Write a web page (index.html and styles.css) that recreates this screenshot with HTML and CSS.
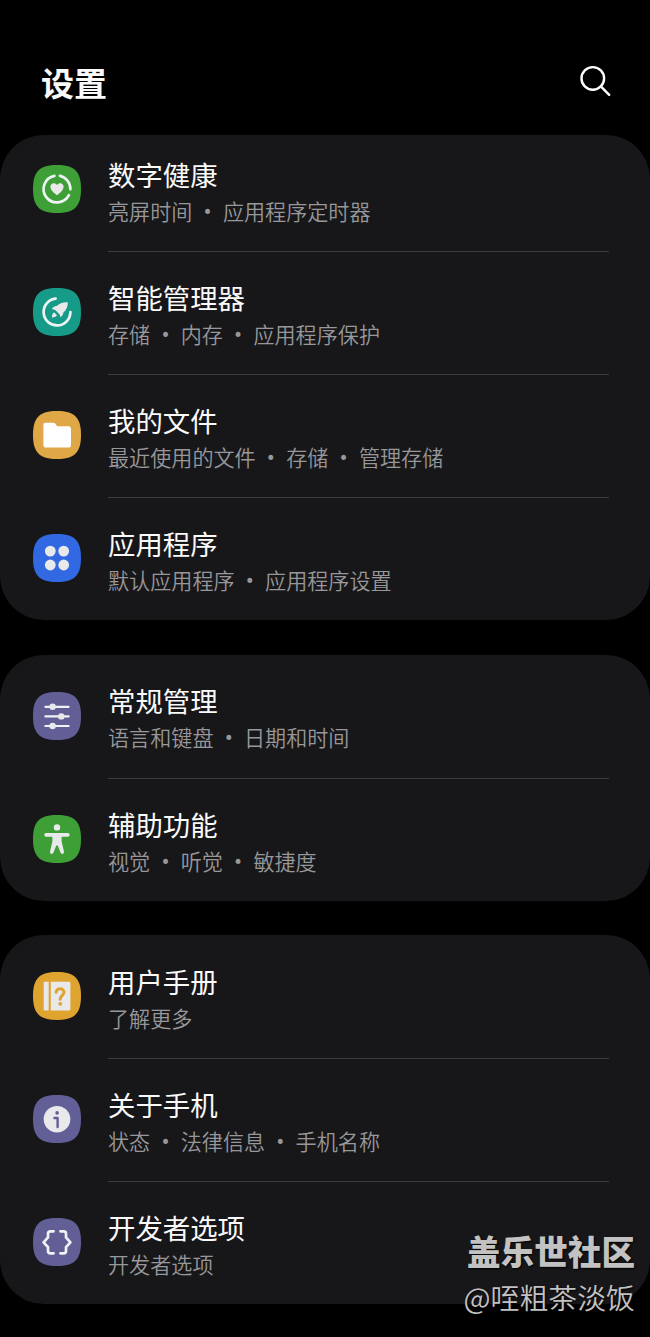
FILE: index.html
```html
<!DOCTYPE html>
<html lang="zh-CN">
<head>
  <meta charset="UTF-8">
  <meta name="viewport" content="width=device-width, initial-scale=1.0">
  <title>设置</title>
  <link rel="stylesheet" href="styles.css">
</head>
<body>
  <header class="header">
    <h1>设置</h1>
    <svg class="search" viewBox="0 0 32 32">
      <circle cx="13.8" cy="13.4" r="11.3"/>
      <path d="M21.8 21.4L30.2 29.8"/>
    </svg>
  </header>

  <main>
    <section class="card scrolled">
      <div class="item">
        <svg class="icon green" viewBox="0 0 48 48">
          <path class="bg" d="M24 0C41.5 0 48 6.5 48 24S41.5 48 24 48 0 41.5 0 24 6.5 0 24 0Z"/>
          <path class="line" d="M26.9 10.9A13.4 13.4 0 0 1 37.4 24.3M35.9 30.2A13.4 13.4 0 1 1 21.4 10.9"/>
          <path class="fill" d="M24 30.2C21.5 28.2 17.4 25.3 17.4 21.7C17.4 17.9 22 17 24 20.1C26 17 30.6 17.9 30.6 21.7C30.6 25.3 26.5 28.2 24 30.2Z"/>
        </svg>
        <div class="text">
          <h2>数字健康</h2>
          <p>亮屏时间<span class="dot">•</span>应用程序定时器</p>
        </div>
      </div>
      <div class="item">
        <svg class="icon teal" viewBox="0 0 48 48">
          <path class="bg" d="M24 0C41.5 0 48 6.5 48 24S41.5 48 24 48 0 41.5 0 24 6.5 0 24 0Z"/>
          <path class="line" d="M22.6 10.7A13.4 13.4 0 1 0 37.4 24"/>
          <path class="fill" d="M34.8 14.2C35 19 33 22.2 30.4 24.6C30.2 26.6 29.2 28.2 27.4 29.3C27.2 27 26.6 26 25.4 25.2L22.8 22.6C21.8 21.6 20.6 21.2 18.7 21.2C19.8 19.2 21.4 18.3 23.6 18.1C26.4 15.2 30 13.9 34.8 14.2Z"/>
          <path class="fill" d="M21 24.2L24 27.2C23 28.8 21.3 29.3 18.8 29.4C19 27 19.6 25.2 21 24.2Z"/>
        </svg>
        <div class="text">
          <h2>智能管理器</h2>
          <p>存储<span class="dot">•</span>内存<span class="dot">•</span>应用程序保护</p>
        </div>
      </div>
      <div class="item">
        <svg class="icon amber" viewBox="0 0 48 48">
          <path class="bg" d="M24 0C41.5 0 48 6.5 48 24S41.5 48 24 48 0 41.5 0 24 6.5 0 24 0Z"/>
          <path class="folder" d="M12.3 11.8H20.6C21.4 11.8 21.9 12.1 22.4 12.8L24.1 15.3H35.5C37 15.3 38 16.3 38 17.8V34C38 35.6 37 36.6 35.4 36.6H13C11.4 36.6 10.4 35.6 10.4 34V13.7C10.4 12.5 11.1 11.8 12.3 11.8Z"/>
        </svg>
        <div class="text">
          <h2>我的文件</h2>
          <p>最近使用的文件<span class="dot">•</span>存储<span class="dot">•</span>管理存储</p>
        </div>
      </div>
      <div class="item">
        <svg class="icon blue" viewBox="0 0 48 48">
          <path class="bg" d="M24 0C41.5 0 48 6.5 48 24S41.5 48 24 48 0 41.5 0 24 6.5 0 24 0Z"/>
          <circle class="fill" cx="17.3" cy="17.1" r="5.4"/>
          <circle class="fill" cx="30.7" cy="17.1" r="5.4"/>
          <circle class="fill" cx="17.3" cy="31" r="5.4"/>
          <circle class="fill" cx="30.7" cy="31" r="5.4"/>
        </svg>
        <div class="text">
          <h2>应用程序</h2>
          <p>默认应用程序<span class="dot">•</span>应用程序设置</p>
        </div>
      </div>
    </section>

    <section class="card">
      <div class="item">
        <svg class="icon purple" viewBox="0 0 48 48">
          <path class="bg" d="M24 0C41.5 0 48 6.5 48 24S41.5 48 24 48 0 41.5 0 24 6.5 0 24 0Z"/>
          <path class="line thin" d="M12.4 14.8H35.6M12.4 24.4H35.6M12.4 34H35.6"/>
          <circle class="fill" cx="19.6" cy="14.8" r="3.2"/>
          <circle class="fill" cx="28.3" cy="24.4" r="3.2"/>
          <circle class="fill" cx="19.6" cy="34" r="3.2"/>
        </svg>
        <div class="text">
          <h2>常规管理</h2>
          <p>语言和键盘<span class="dot">•</span>日期和时间</p>
        </div>
      </div>
      <div class="item">
        <svg class="icon green" viewBox="0 0 48 48">
          <path class="bg" d="M24 0C41.5 0 48 6.5 48 24S41.5 48 24 48 0 41.5 0 24 6.5 0 24 0Z"/>
          <circle class="fill" cx="24" cy="12.4" r="3.2"/>
          <path class="fill" d="M13 18.1H35C37.2 18.1 37.2 21.7 35 21.7H28.6V26.2L31 36.7C31.4 39.1 28.3 39.7 27.5 37.6L24.7 30.4H23.3L20.5 37.6C19.7 39.7 16.6 39.1 17 36.7L19.4 26.2V21.7H13C10.8 21.7 10.8 18.1 13 18.1Z"/>
        </svg>
        <div class="text">
          <h2>辅助功能</h2>
          <p>视觉<span class="dot">•</span>听觉<span class="dot">•</span>敏捷度</p>
        </div>
      </div>
    </section>

    <section class="card">
      <div class="item">
        <svg class="icon gold" viewBox="0 0 48 48">
          <path class="bg" d="M24 0C41.5 0 48 6.5 48 24S41.5 48 24 48 0 41.5 0 24 6.5 0 24 0Z"/>
          <path class="fill" d="M12 9.7H15.7V38.6H12C11.2 38.6 10.7 38.1 10.7 37.3V11C10.7 10.2 11.2 9.7 12 9.7Z"/>
          <path class="fill" d="M17.8 9.7H36C36.9 9.7 37.4 10.2 37.4 11V37.3C37.4 38.1 36.9 38.6 36 38.6H17.8Z"/>
          <path class="mark bold" d="M23.2 20.2C23.3 15.8 31 15.6 31 20.3C31 23.4 27.2 23.3 27.2 27.2"/>
          <circle class="bg" cx="27.2" cy="31.8" r="1.9"/>
        </svg>
        <div class="text">
          <h2>用户手册</h2>
          <p>了解更多</p>
        </div>
      </div>
      <div class="item">
        <svg class="icon purple" viewBox="0 0 48 48">
          <path class="bg" d="M24 0C41.5 0 48 6.5 48 24S41.5 48 24 48 0 41.5 0 24 6.5 0 24 0Z"/>
          <circle class="fill" cx="24" cy="24.2" r="13.3"/>
          <circle class="bg" cx="24.1" cy="17.9" r="1.8"/>
          <path class="mark" d="M21.4 23H24.6V32"/>
        </svg>
        <div class="text">
          <h2>关于手机</h2>
          <p>状态<span class="dot">•</span>法律信息<span class="dot">•</span>手机名称</p>
        </div>
      </div>
      <div class="item">
        <svg class="icon purple" viewBox="0 0 48 48">
          <path class="bg" d="M24 0C41.5 0 48 6.5 48 24S41.5 48 24 48 0 41.5 0 24 6.5 0 24 0Z"/>
          <path class="line" d="M20.6 13.3H17.4Q15 13.3 15 15.7V19.4L10.6 24.3L15 29.2V32.9Q15 35.3 17.4 35.3H20.6M27.4 13.3H30.6Q33 13.3 33 15.7V19.4L37.4 24.3L33 29.2V32.9Q33 35.3 30.6 35.3H27.4"/>
        </svg>
        <div class="text">
          <h2>开发者选项</h2>
          <p>开发者选项</p>
        </div>
      </div>
    </section>
  </main>

  <div class="watermark">
    <strong>盖乐世社区</strong>
    <span>@咥粗茶淡饭</span>
  </div>
</body>
</html>
```
FILE: styles.css
```css
* {
  box-sizing: border-box;
}

body {
  position: relative;
  margin: 0;
  height: 1337px;
  overflow: hidden;
  background-color: #000;
  color: #fafafa;
  font-family: "Noto Sans CJK SC", sans-serif;
}

h1,
h2,
p {
  margin: 0;
  font-weight: 400;
}

.header {
  display: flex;
  justify-content: space-between;
  align-items: center;
  height: 135px;
  padding: 27px 39px 0 41px;
}

.header h1 {
  padding-top: 2px;
  font-size: 33px;
  font-weight: 700;
  line-height: 48px;
}

.search {
  width: 32px;
  height: 32px;
  fill: none;
  stroke: #fff;
  stroke-width: 2.4;
  stroke-linecap: round;
}

main {
  display: flex;
  flex-direction: column;
  gap: 34.5px;
}

.card {
  overflow: hidden;
  border-radius: 44px;
  background-color: #17171a;
}

/* first card is partly scrolled under the header */
.card.scrolled .item:first-child {
  margin-top: -7px;
}

.item {
  display: flex;
  align-items: center;
  height: 123px;
  padding-left: 33px;
}

.icon {
  flex: none;
  width: 48px;
  height: 48px;
  margin: 0 27px 1px 0;
}

.text {
  display: flex;
  flex-direction: column;
  justify-content: center;
  width: 501px;
  height: 100%;
  padding-bottom: 3px;
}

.item + .item .text {
  border-top: 1px solid #3b3b3e;
}

.text h2 {
  font-size: 27.4px;
  line-height: 44px;
}

.text p {
  padding-top: 2px;
  font-size: 21.1px;
  font-weight: 350;
  line-height: 27px;
  color: #98989a;
}

.dot {
  display: inline-block;
  width: 30.5px;
  text-align: center;
  font-family: Roboto, sans-serif;
  font-size: 24px;
  font-weight: 400;
  line-height: 20px;
}

.green { color: #3d9f35; }
.teal { color: #159b87; }
.amber { color: #e0a746; }
.blue { color: #3268e2; }
.purple { color: #625f97; }
.gold { color: #dfa32f; }

.bg {
  fill: currentColor;
}

.fill {
  fill: #e9e9ec;
}

.folder {
  fill: #fff;
}

.line,
.mark {
  fill: none;
  stroke: #eef3f3;
  stroke-width: 2.7;
  stroke-linecap: round;
  stroke-linejoin: round;
}

.line.thin {
  stroke-width: 2.2;
}

.mark {
  stroke: currentColor;
  stroke-width: 2.4;
}

.mark.bold {
  stroke-width: 3;
}

.watermark {
  position: absolute;
  right: 15px;
  bottom: 19px;
  display: flex;
  flex-direction: column;
  align-items: flex-end;
  color: #c2c2c2;
  text-shadow: 1px 1px 2px #000;
}

.watermark strong {
  font-size: 33.6px;
  font-weight: 900;
  line-height: 46px;
}

.watermark span {
  font-size: 28.9px;
  font-weight: 350;
  line-height: 44px;
}
```
